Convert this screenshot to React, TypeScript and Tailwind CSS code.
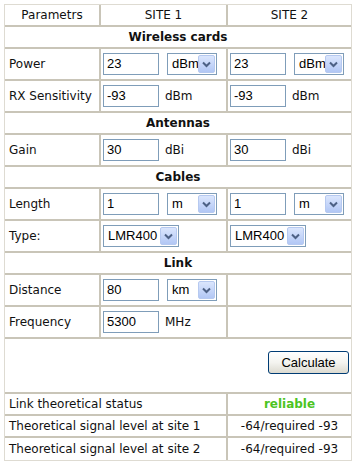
import type { ReactNode } from "react";

const LINE = "border-[#c9c5b8]";

function TextBox({ value, w = "w-[56px]" }: { value: string; w?: string }) {
  return (
    <div
      className={`${w} flex h-[22px] items-center border border-[#7f9db9] bg-white pl-[3px] font-['Liberation_Sans',Arial,sans-serif] text-[13px] text-black`}
    >
      {value}
    </div>
  );
}

function Arrow() {
  return (
    <div className="flex h-[18px] w-[17px] shrink-0 items-center justify-center rounded-[2px] border border-[#b6c9f0] bg-gradient-to-b from-[#dbe6fd] to-[#b2c7f5]">
      <svg width="9" height="7" viewBox="0 0 9 7">
        <path d="M1 1.5 L4.5 5 L8 1.5" fill="none" stroke="#4d6185" strokeWidth="2" />
      </svg>
    </div>
  );
}

function Dropdown({ value, w = "w-[50px]" }: { value: string; w?: string }) {
  return (
    <div
      className={`${w} flex h-[22px] items-center overflow-hidden border border-[#7f9db9] bg-white p-[1px] font-['Liberation_Sans',Arial,sans-serif] text-[13px] text-black`}
    >
      <div className="min-w-0 flex-1 overflow-hidden whitespace-nowrap pl-[3px]">{value}</div>
      <Arrow />
    </div>
  );
}

function Unit({ children }: { children: ReactNode }) {
  return <span className="ml-[6px] text-[12px]">{children}</span>;
}

function Row({ label, a, b, h = "h-[32px]" }: { label: string; a: ReactNode; b: ReactNode; h?: string }) {
  return (
    <div className={`flex ${h} border-b-2 ${LINE}`}>
      <div className={`flex w-[96px] items-center border-r-2 ${LINE} pl-[4px]`}>{label}</div>
      <div className={`flex w-[127px] items-center border-r-2 ${LINE} pl-[2px]`}>{a}</div>
      <div className="flex flex-1 items-center pl-[2px]">{b}</div>
    </div>
  );
}

function Section({ title }: { title: string }) {
  return (
    <div className={`flex h-[22px] items-center justify-center border-b-2 ${LINE} font-bold`}>
      {title}
    </div>
  );
}

function Pair({ input, select, unit }: { input: string; select?: string; unit?: string }) {
  return (
    <>
      <TextBox value={input} />
      {select && (
        <div className="ml-[8px]">
          <Dropdown value={select} />
        </div>
      )}
      {unit && <Unit>{unit}</Unit>}
    </>
  );
}

function ResultRow({ label, value, last }: { label: string; value: ReactNode; last?: boolean }) {
  return (
    <div className={`flex h-[22px] ${last ? "" : `border-b-2 ${LINE}`}`}>
      <div className={`flex w-[223px] items-center border-r-2 ${LINE} pl-[4px]`}>{label}</div>
      <div className="flex flex-1 items-center justify-center">{value}</div>
    </div>
  );
}

export default function App() {
  return (
    <div className="h-[467px] w-[355px] bg-white pl-[4px] pt-[4px] font-['DejaVu_Sans',Verdana,sans-serif] text-[12px] text-[#111]">
      <div className="w-[348px] border border-[#dedbd2]">
        <div className={`flex h-[22px] border-b-2 ${LINE}`}>
          <div className={`flex w-[96px] items-center justify-center border-r-2 ${LINE}`}>Parametrs</div>
          <div className={`flex w-[127px] items-center justify-center border-r-2 ${LINE}`}>SITE 1</div>
          <div className="flex flex-1 items-center justify-center">SITE 2</div>
        </div>

        <Section title="Wireless cards" />
        <Row label="Power" a={<Pair input="23" select="dBm" />} b={<Pair input="23" select="dBm" />} />
        <Row label="RX Sensitivity" a={<Pair input="-93" unit="dBm" />} b={<Pair input="-93" unit="dBm" />} />

        <Section title="Antennas" />
        <Row label="Gain" a={<Pair input="30" unit="dBi" />} b={<Pair input="30" unit="dBi" />} />

        <Section title="Cables" />
        <Row label="Length" a={<Pair input="1" select="m" />} b={<Pair input="1" select="m" />} />
        <Row
          label="Type:"
          a={<Dropdown value="LMR400" w="w-[76px]" />}
          b={<Dropdown value="LMR400" w="w-[76px]" />}
        />

        <Section title="Link" />
        <Row label="Distance" a={<Pair input="80" select="km" />} b={null} />
        <Row label="Frequency" a={<Pair input="5300" unit="MHz" />} b={null} />

        <div className={`flex h-[55px] items-start justify-end border-b-2 ${LINE} pr-[2px] pt-[12px]`}>
          <button className="h-[23px] w-[81px] rounded-[3px] border border-[#003c74] bg-gradient-to-b from-white via-[#f4f4f0] to-[#dcdad0] font-['Liberation_Sans',Arial,sans-serif] text-[13px] text-black">
            Calculate
          </button>
        </div>

        <ResultRow
          label="Link theoretical status"
          value={<span className="font-bold text-[#4cc41f]">reliable</span>}
        />
        <ResultRow label="Theoretical signal level at site 1" value="-64/required -93" />
        <ResultRow label="Theoretical signal level at site 2" value="-64/required -93" last />
      </div>
    </div>
  );
}
